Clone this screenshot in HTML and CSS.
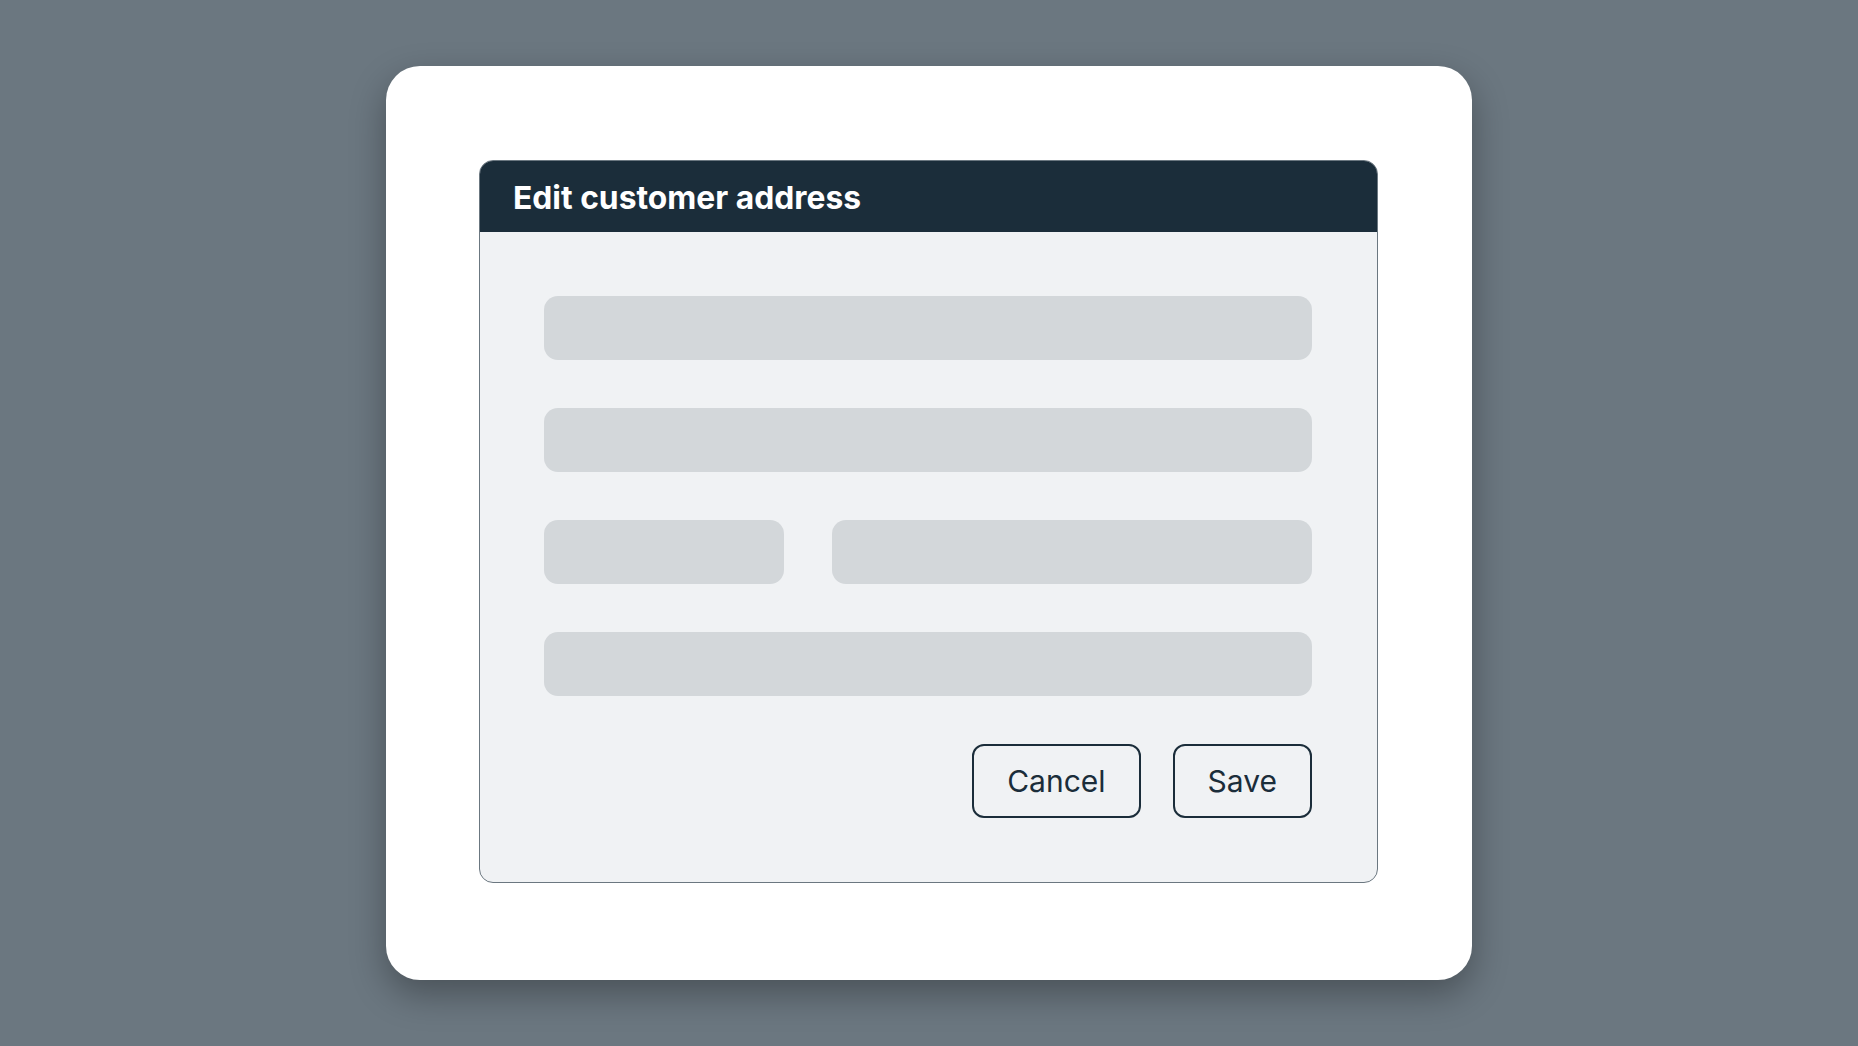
FILE: index.html
```html
<!DOCTYPE html>
<html lang="en">
<head>
<meta charset="utf-8">
<title>Edit customer address</title>
<link rel="stylesheet" href="styles.css">
</head>
<body>
<main class="stage">
  <section class="card">
    <div class="dialog">
      <header class="dialog-header">
        <h1 class="dialog-title">Edit customer address</h1>
      </header>
      <div class="dialog-body">
        <div class="field"></div>
        <div class="field"></div>
        <div class="field-row">
          <div class="field"></div>
          <div class="field"></div>
        </div>
        <div class="field"></div>
        <div class="actions">
          <button class="btn" type="button">Cancel</button>
          <button class="btn" type="button">Save</button>
        </div>
      </div>
    </div>
  </section>
</main>
</body>
</html>
```
FILE: styles.css
```css
* { box-sizing: border-box; }
html, body {
  margin: 0;
  height: 100%;
}
body {
  background: #6b7780;
  font-family: Inter, "Liberation Sans", Arial, sans-serif;
}
.stage {
  height: 100vh;
  display: flex;
  align-items: center;
  justify-content: center;
}
.card {
  background: #ffffff;
  border-radius: 34px;
  padding: 94px 94px 97px 93px;
  box-shadow: 0 14px 36px rgba(0, 0, 0, 0.32);
}
.dialog {
  width: 899px;
  border: 1px solid #6b7780;
  border-radius: 14px;
  background: #f0f2f4;
  overflow: hidden;
}
.dialog-header {
  background: #1b2d3a;
  height: 71px;
  display: flex;
  align-items: center;
  padding: 2px 33px 0;
}
.dialog-title {
  margin: 0;
  color: #ffffff;
  font-size: 31.8px;
  font-weight: 700;
  letter-spacing: 0;
}
.dialog-body {
  padding: 64px 65px 64px 64px;
  display: flex;
  flex-direction: column;
  gap: 48px;
}
.field {
  height: 64px;
  background: #d3d7da;
  border-radius: 14px;
}
.field-row {
  display: grid;
  grid-template-columns: 1fr 2fr;
  gap: 48px;
}
.actions {
  display: flex;
  justify-content: flex-end;
  gap: 32px;
}
.btn {
  height: 74px;
  padding: 0 33px;
  border: 2px solid #1b2d3a;
  border-radius: 12px;
  background: #f0f2f4;
  color: #1b2d3a;
  font-family: Inter, "Liberation Sans", Arial, sans-serif;
  font-size: 30px;
  font-weight: 400;
}
```
